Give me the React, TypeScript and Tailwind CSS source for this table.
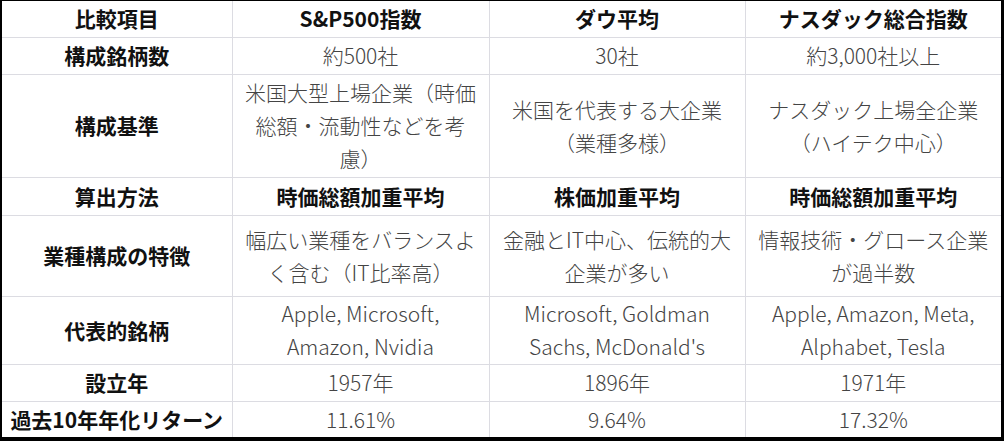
type Row = {
  label: string;
  cells: string[];
  bold?: boolean;
  h: string;
};

const rows: Row[] = [
  { label: "構成銘柄数", cells: ["約500社", "30社", "約3,000社以上"], h: "h-[37px]" },
  {
    label: "構成基準",
    cells: [
      "米国大型上場企業（時価総額・流動性などを考慮）",
      "米国を代表する大企業（業種多様）",
      "ナスダック上場全企業（ハイテク中心）",
    ],
    h: "h-[103px]",
  },
  {
    label: "算出方法",
    cells: ["時価総額加重平均", "株価加重平均", "時価総額加重平均"],
    bold: true,
    h: "h-[38px]",
  },
  {
    label: "業種構成の特徴",
    cells: [
      "幅広い業種をバランスよく含む（IT比率高）",
      "金融とIT中心、伝統的大企業が多い",
      "情報技術・グロース企業が過半数",
    ],
    h: "h-[81px]",
  },
  {
    label: "代表的銘柄",
    cells: [
      "Apple, Microsoft, Amazon, Nvidia",
      "Microsoft, Goldman Sachs, McDonald's",
      "Apple, Amazon, Meta, Alphabet, Tesla",
    ],
    h: "h-[68px]",
  },
  { label: "設立年", cells: ["1957年", "1896年", "1971年"], h: "h-[37px]" },
  { label: "過去10年年化リターン", cells: ["11.61%", "9.64%", "17.32%"], h: "h-[36px]" },
];

const headers = ["S&P500指数", "ダウ平均", "ナスダック総合指数"];

export default function App() {
  return (
    <div className="w-[1004px] h-[441px] bg-black">
      <div
        className="w-[1004px] h-[441px] border-t border-l-2 border-r-[3px] border-b-4 border-black bg-white"
        style={{ fontFamily: '"Noto Sans CJK JP", "Noto Sans", sans-serif' }}
      >
        <table className="w-full table-fixed border-collapse text-[21px] leading-[33px] text-center">
          <colgroup>
            <col className="w-[230px]" />
            <col className="w-[257px]" />
            <col className="w-[256px]" />
            <col className="w-[256px]" />
          </colgroup>
          <thead>
            <tr className="h-[36px]">
              <th className="border-r border-b border-[#dcdce2] font-bold text-[#111111] px-[10px]">
                比較項目
              </th>
              {headers.map((t, i) => (
                <th
                  key={t}
                  className={`border-b border-[#dcdce2] font-bold text-[#111111] px-[10px] ${
                    i < 2 ? "border-r" : ""
                  }`}
                >
                  {t}
                </th>
              ))}
            </tr>
          </thead>
          <tbody>
            {rows.map((r, ri) => (
              <tr key={r.label} className={r.h}>
                <td
                  className={`border-r border-[#dcdce2] font-bold text-[#111111] px-[6px] ${
                    ri < rows.length - 1 ? "border-b" : ""
                  }`}
                >
                  {r.label}
                </td>
                {r.cells.map((c, ci) => (
                  <td
                    key={ci}
                    className={`border-[#dcdce2] px-[10px] ${ci < 2 ? "border-r" : ""} ${
                      ri < rows.length - 1 ? "border-b" : ""
                    } ${r.bold ? "font-bold text-[#111111]" : "font-light text-[#444444]"}`}
                  >
                    {c}
                  </td>
                ))}
              </tr>
            ))}
          </tbody>
        </table>
      </div>
    </div>
  );
}
